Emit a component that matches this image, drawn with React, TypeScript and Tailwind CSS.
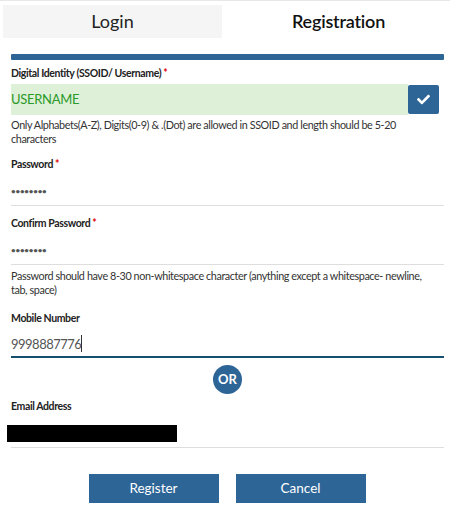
import { FaCheck } from "react-icons/fa";

function Label({ text, req }: { text: string; req?: boolean }) {
  return (
    <div className="text-[10.5px] tracking-[-0.38px] leading-[16px] font-bold text-[#222]">
      {text}
      {req && <span className="text-[#e00000] ml-[2px]">*</span>}
    </div>
  );
}

function Dots() {
  return (
    <div className="h-[34px] border-b border-[#dedede] flex items-end pb-[9px] text-[#555] text-[8px] leading-[10px] font-bold tracking-[-0.2px]">
      ••••••••
    </div>
  );
}

export default function App() {
  return (
    <div className="w-[450px] h-[506px] bg-white overflow-hidden border-t border-[#e8e8e8] font-['Lato','Noto_Sans',sans-serif]">
      <div className="flex pl-[3px] pt-[4px] h-[37px]">
        <div className="w-[219px] bg-[#f5f5f5] flex items-center justify-center text-[18px] text-[#222]">Login</div>
        <div className="flex-1 flex items-center justify-center text-[18px] font-semibold tracking-[-0.2px] text-[#111] pl-[5px]">Registration</div>
      </div>
      <div className="mx-[11px] w-[433px] mt-[16px]">
        <div className="h-[6px] bg-[#2d6597] rounded-[1px]" />
        <div className="mt-[5px]"><Label text="Digital Identity (SSOID/ Username)" req /></div>
        <div className="flex mt-[3px] items-center">
          <div className="w-[397px] h-[31px] bg-[#dff0d8] flex items-center text-[#2a9a2a] text-[13px] tracking-[-0.3px]">USERNAME</div>
          <div className="w-[31px] h-[29px] bg-[#2d6597] rounded-[2px] flex items-center justify-center text-white text-[13px]"><FaCheck /></div>
        </div>
        <div className="mt-[3px] pr-[30px] text-[10.8px] tracking-[-0.4px] leading-[14px] text-[#333]">
          Only Alphabets(A-Z), Digits(0-9) &amp; .(Dot) are allowed in SSOID and length should be 5-20 characters
        </div>
        <div className="mt-[10px]"><Label text="Password" req /></div>
        <Dots />
        <div className="mt-[9px]"><Label text="Confirm Password" req /></div>
        <Dots />
        <div className="mt-[4px] pr-[10px] text-[10.8px] tracking-[-0.4px] leading-[14px] text-[#333]">
          Password should have 8-30 non-whitespace character (anything except a whitespace- newline, tab, space)
        </div>
        <div className="mt-[13px]"><Label text="Mobile Number" /></div>
        <div className="h-[32px] border-b-2 border-[#14506e] flex items-end pb-[4px] text-[13px] tracking-[-0.5px] leading-[16px] text-[#555]">
          9998887776<span className="inline-block w-px h-[17px] bg-[#333]" />
        </div>
        <div className="flex justify-center mt-[7px]">
          <div className="w-[29px] h-[29px] rounded-full bg-[#2d6597] text-white font-bold text-[13px] flex items-center justify-center">OR</div>
        </div>
        <div className="mt-[4px]"><Label text="Email Address" /></div>
        <div className="h-[34px] border-b border-[#dedede] pt-[11px]">
          <div className="w-[170px] h-[17px] bg-black -ml-[4px]" />
        </div>
        <div className="flex justify-center gap-[17px] mt-[26px] pr-[1px]">
          <div className="w-[130px] h-[29px] bg-[#2d6597] text-white text-[13.5px] flex items-center justify-center">Register</div>
          <div className="w-[130px] h-[29px] bg-[#2d6597] text-white text-[13.5px] flex items-center justify-center">Cancel</div>
        </div>
      </div>
    </div>
  );
}
